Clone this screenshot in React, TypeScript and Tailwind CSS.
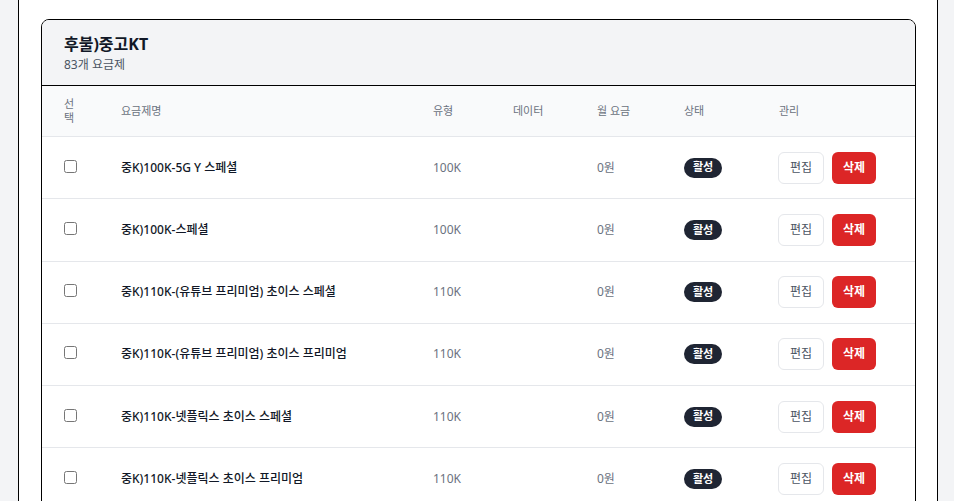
const plans = [
  { name: "중K)100K-5G Y 스페셜", type: "100K" },
  { name: "중K)100K-스페셜", type: "100K" },
  { name: "중K)110K-(유튜브 프리미엄) 초이스 스페셜", type: "110K" },
  { name: "중K)110K-(유튜브 프리미엄) 초이스 프리미엄", type: "110K" },
  { name: "중K)110K-넷플릭스 초이스 스페셜", type: "110K" },
  { name: "중K)110K-넷플릭스 초이스 프리미엄", type: "110K" },
];

const cols = "grid grid-cols-[57px_312px_80px_84px_87px_95px_1fr]";

const App = () => {
  return (
    <div
      className="h-[501px] overflow-hidden bg-[#f3f4f6] pl-[18px] pr-[16px]"
      style={{ fontFamily: '"Noto Sans", "Noto Sans CJK KR", sans-serif' }}
    >
      <div className="border-x border-black bg-white pl-[22px] pr-[21px] pt-[19px] pb-6">
        <section className="overflow-hidden rounded-lg border border-black bg-white">
          <header className="h-[66px] border-b border-black bg-[#f3f4f6] px-[22px] pt-[13px]">
            <h2 className="text-[16px] leading-[22px] font-bold text-[#111827]">후불)중고KT</h2>
            <p className="mt-[1px] text-[12px] leading-[18px] text-[#4b5563]">83개 요금제</p>
          </header>

          <div className={`${cols} h-[51px] items-center border-b border-[#e5e7eb] bg-[#f9fafb] text-[11px] leading-[14px] text-[#6b7280]`}>
            <div className="pl-[22px] pr-[20px]">선택</div>
            <div className="pl-[22px]">요금제명</div>
            <div className="pl-[22px]">유형</div>
            <div className="pl-[22px]">데이터</div>
            <div className="pl-[22px]">월 요금</div>
            <div className="pl-[22px]">상태</div>
            <div className="pl-[22px]">관리</div>
          </div>

          {plans.map((p) => (
            <div key={p.name} className={`${cols} h-[62.25px] items-center border-b border-[#e5e7eb] text-[12px]`}>
              <div className="flex pl-[22px] pb-[3px]">
                <input type="checkbox" className="h-[13px] w-[13px]" />
              </div>
              <div className="pl-[22px] font-medium text-[#111827]">{p.name}</div>
              <div className="pl-[22px] text-[#6b7280]">{p.type}</div>
              <div className="pl-[22px] text-[#6b7280]"></div>
              <div className="pl-[22px] text-[#6b7280]">0원</div>
              <div className="pl-[22px]">
                <span className="inline-flex h-[20px] items-center rounded-full bg-[#1f2533] px-[9px] text-[11px] font-bold text-white">
                  활성
                </span>
              </div>
              <div className="flex gap-2 pl-[21px]">
                <button className="h-[32px] w-[46px] rounded-md border border-[#e5e7eb] bg-white text-[12px] text-[#4b5563]">
                  편집
                </button>
                <button className="h-[32px] w-[44px] rounded-md bg-[#dc2626] text-[12px] font-bold text-white">
                  삭제
                </button>
              </div>
            </div>
          ))}
        </section>
      </div>
    </div>
  );
};

export default App;
